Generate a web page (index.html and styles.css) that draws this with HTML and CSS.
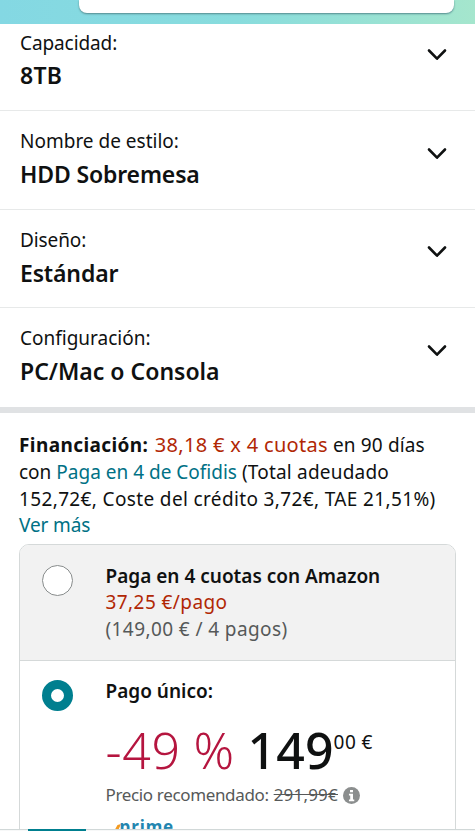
FILE: index.html
```html
<!DOCTYPE html>
<html lang="es">
<head>
<meta charset="utf-8">
<meta name="viewport" content="width=device-width, initial-scale=1">
<title>Disco duro 8TB</title>
<link rel="stylesheet" href="styles.css">
</head>
<body>
<div class="screen">
  <header class="topbar"><div class="search"></div></header>
  <section class="options">
    <div class="option">
      <div><div class="label t-cap">Capacidad:</div><div class="value t-tb">8TB</div></div>
      <svg class="chevron" viewBox="0 0 20 14"><path d="M2 2.5 10 10.7 18 2.5"/></svg>
    </div>
    <div class="option">
      <div><div class="label t-style">Nombre de estilo:</div><div class="value t-hdd">HDD Sobremesa</div></div>
      <svg class="chevron" viewBox="0 0 20 14"><path d="M2 2.5 10 10.7 18 2.5"/></svg>
    </div>
    <div class="option">
      <div><div class="label t-design">Diseño:</div><div class="value t-std">Estándar</div></div>
      <svg class="chevron" viewBox="0 0 20 14"><path d="M2 2.5 10 10.7 18 2.5"/></svg>
    </div>
    <div class="option">
      <div><div class="label t-config">Configuración:</div><div class="value t-pc">PC/Mac o Consola</div></div>
      <svg class="chevron" viewBox="0 0 20 14"><path d="M2 2.5 10 10.7 18 2.5"/></svg>
    </div>
  </section>
  <section class="financing">
    <div class="line l1"><b>Financiación:</b> <span class="red">38,18 € x 4 cuotas</span> <span class="term">en 90 días</span></div>
    <div class="line l2">con <a class="link">Paga en 4 de Cofidis</a> <span class="owed">(Total adeudado</span></div>
    <div class="line l3">152,72€, Coste del crédito 3,72€, TAE 21,51%)</div>
    <div class="line l4"><a class="link">Ver más</a></div>
  </section>
  <section class="card">
    <div class="plan plan-split">
      <span class="radio"></span>
      <div class="detail">
        <div class="title t-split">Paga en 4 cuotas con Amazon</div>
        <div class="red t-each">37,25 €/pago</div>
        <div class="muted t-total">(149,00 € / 4 pagos)</div>
      </div>
    </div>
    <div class="plan plan-single">
      <span class="radio checked"></span>
      <div class="detail">
        <div class="title t-single">Pago único:</div>
        <div class="price"><span class="discount">-49 %</span><span class="whole">149</span><span class="cents">00 €</span></div>
        <div class="rrp"><span class="rrp-label">Precio recomendado:</span><s>291,99€</s>
          <svg class="info" viewBox="0 0 16 16"><circle cx="8" cy="8" r="8"/><path d="M6.6 2.8h2.8v2.2H6.6zM5.6 6.3h3.8v5.4h1.2v1.6H5.6v-1.6h1.2V7.9H5.6z"/></svg>
        </div>
        <div class="prime"><svg viewBox="0 0 8 12"><path d="M0 12 4.5 4 8 3 4 12Z"/></svg><span>prime</span></div>
      </div>
    </div>
  </section>
  <footer class="tabs"><div class="tab-active"></div></footer>
</div>
</body>
</html>
```
FILE: styles.css
```css
* { box-sizing: border-box; }
body { margin: 0; background: #fff; color: #0f1111; font-family: "Noto Sans", sans-serif; font-size: 19px; }
.screen { position: relative; width: 475px; height: 831px; overflow: hidden; }
.topbar { height: 24px; padding: 0 21px 0 79px; background: linear-gradient(90deg, #84d8e3, #88dcdd 50%, #a5e6cd); }
.search { height: 12.5px; background: #fff; border-radius: 0 0 8px 8px; box-shadow: 0 1px 2px #548a8e; }
.options { height: 388.5px; border-bottom: 6.5px solid #e0e2e4; }
.option { display: flex; justify-content: space-between; height: 98.6px; padding: 17px 28px 0 20px; border-bottom: 1.5px solid #e7e9e9; white-space: nowrap; }
.option:first-child { height: 87px; padding-top: 6px; }
.option:first-child .chevron { margin-top: 17.5px; }
.option:first-child .value { margin-top: 3px; }
.option:last-child { border: 0; }
.label { line-height: 27px; }
.t-cap, .t-design { letter-spacing: -0.1px; }
.value { font-size: 23px; font-weight: 630; line-height: 30px; margin-top: 4px; }
.t-tb { letter-spacing: 0.3px; }
.t-hdd { letter-spacing: -0.15px; }
.t-std { letter-spacing: -0.15px; }
.chevron { width: 20px; height: 14px; margin-top: 18.5px; fill: none; stroke: #0f1111; stroke-width: 2.6; stroke-linecap: round; stroke-linejoin: round; }
.financing { padding: 18px 18px 0 19px; height: 131px; }
.line { height: 27px; line-height: 27px; white-space: nowrap; }
b { font-weight: 700; letter-spacing: 0.4px; margin-right: 1.5px; }
.title { font-weight: 600; }
.red { color: #b12704; }
.l1 .red { font-size: 20px; letter-spacing: 0.32px; }
.l1 .term { letter-spacing: 0.15px; }
.l1 { height: 28px; }
.l2 .owed { letter-spacing: 0.2px; }
.l3 { height: 26px; letter-spacing: 0.36px; }
.link { color: #007185; }
.l4 { letter-spacing: -0.1px; }
.t-each { letter-spacing: 0.42px; }
.t-total { letter-spacing: 0.4px; }
.card { margin-left: 18.5px; width: 437.5px; height: 310px; border: 1.5px solid #d5d9d9; border-radius: 10px 10px 0 0; overflow: hidden; }
.plan { display: flex; padding-left: 22px; white-space: nowrap; }
.plan-split { height: 116px; background: #f2f2f2; border-bottom: 1.5px solid #d5d9d9; padding-top: 18px; }
.plan-single { padding-top: 17.5px; }
.radio { width: 31px; height: 31px; margin: 2px 33px 0 0; border: 1.5px solid #888c8c; border-radius: 50%; background: #fff; flex: none; }
.radio.checked { border: 9.5px solid #007f8f; }
.detail { line-height: 26.8px; }
.muted { color: #565959; }
.price { display: flex; height: 77px; line-height: 77px; padding-top: 7px; font-size: 50px; }
.discount { width: 131px; color: #b5153f; font-weight: 300; letter-spacing: 0.7px; word-spacing: -1px; }
.whole { margin-left: 11px; font-weight: 500; letter-spacing: 0.1px; }
.cents { font-size: 19px; line-height: 61px; letter-spacing: 0.4px; }
.rrp { display: flex; align-items: center; font-size: 17px; color: #565959; height: 28px; }
.rrp-label { letter-spacing: -0.35px; }
.rrp s { margin-left: 5px; letter-spacing: 0.2px; }
.info { width: 17px; height: 17px; margin-left: 5px; fill: #8b8e8e; }
.info path { fill: #fff; }
.prime { display: flex; height: 30px; padding: 8px 0 0 7px; font-size: 17px; font-weight: 700; line-height: 18px; letter-spacing: 0.9px; color: #2386b0; }
.prime svg { width: 8px; height: 12px; margin: 3px -1px 0 0; fill: #f39a21; }
.tabs { position: absolute; left: 0; right: 0; top: 828.5px; height: 3px; background: linear-gradient(#d1d8d8 1.5px, #f7f8f8 1.5px); padding-left: 28px; }
.tab-active { width: 58px; height: 3px; background: #007f8f; }
```
